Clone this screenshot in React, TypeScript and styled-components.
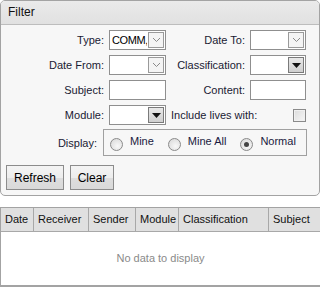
import React from 'react';
import styled, { createGlobalStyle } from 'styled-components';

const Global = createGlobalStyle`
  html, body {
    margin: 0;
    padding: 0;
    background: #ffffff;
  }
  body {
    font-family: 'Liberation Sans', Arial, sans-serif;
    font-size: 11px;
    color: #1c1c1c;
  }
`;

export default function App() {
  return (
    <Page>
      <Global />
      <Panel>
        <PanelHeader>Filter</PanelHeader>
        <PanelBody>
          <FormGrid>
            <Label>Type:</Label>
            <Combo value='COMM,' />
            <Label>Date To:</Label>
            <Combo />

            <Label>Date From:</Label>
            <Combo />
            <Label>Classification:</Label>
            <Combo dark />

            <Label>Subject:</Label>
            <TextBox />
            <Label>Content:</Label>
            <TextBox />

            <Label>Module:</Label>
            <Combo dark />
            <Label>Include lives with:</Label>
            <CheckCell>
              <CheckBox />
            </CheckCell>
          </FormGrid>

          <DisplayRow>
            <DisplayLabel>Display:</DisplayLabel>
            <RadioGroup>
              <Radio label='Mine' />
              <Radio label='Mine All' />
              <Radio label='Normal' checked />
            </RadioGroup>
          </DisplayRow>

          <ButtonRow>
            <Button $w={58}>Refresh</Button>
            <Button $w={44}>Clear</Button>
          </ButtonRow>
        </PanelBody>
      </Panel>

      <Grid>
        <GridHead>
          <HeadCell $w={33}>Date</HeadCell>
          <HeadCell $w={55}>Receiver</HeadCell>
          <HeadCell $w={47}>Sender</HeadCell>
          <HeadCell $w={43}>Module</HeadCell>
          <HeadCell $w={90}>Classification</HeadCell>
          <HeadCell $w={50} $last>Subject</HeadCell>
        </GridHead>
        <GridBody>No data to display</GridBody>
      </Grid>
    </Page>
  );
}

function Combo({ value, dark }: { value?: string; dark?: boolean }) {
  return (
    <ComboBox>
      <ComboText>{value}</ComboText>
      <ComboButton $dark={dark}>
        {dark ? (
          <svg width='9' height='5' viewBox='0 0 9 5'>
            <path d='M0 0h9L4.5 5z' fill='#111' />
          </svg>
        ) : (
          <svg width='9' height='6' viewBox='0 0 9 6'>
            <path d='M1 1l3.5 3.5L8 1' fill='none' stroke='#8a8a8a' strokeWidth='1' />
          </svg>
        )}
      </ComboButton>
    </ComboBox>
  );
}

function Radio({ label, checked }: { label: string; checked?: boolean }) {
  return (
    <RadioItem>
      <RadioDot $checked={checked} />
      <RadioText>{label}</RadioText>
    </RadioItem>
  );
}

const Page = styled.div`
  width: 320px;
  height: 287px;
  display: flex;
  flex-direction: column;
  overflow: hidden;
`;

const Panel = styled.div`
  border: 1px solid #a3a3a3;
  border-radius: 5px;
  background: #f7f7f7;
  height: 196px;
  box-sizing: border-box;
  display: flex;
  flex-direction: column;
`;

const PanelHeader = styled.div`
  height: 23px;
  line-height: 23px;
  padding-left: 7px;
  font-size: 12px;
  background: linear-gradient(#eaeaea, #e1e1e1);
  border-bottom: 1px solid #bdbdbd;
  border-radius: 4px 4px 0 0;
  color: #111;
`;

const PanelBody = styled.div`
  padding: 5px 0 0 0;
  display: flex;
  flex-direction: column;
`;

const FormGrid = styled.div`
  display: grid;
  grid-template-columns: 103px 57px 74px 56px;
  grid-auto-rows: 20px;
  column-gap: 5px;
  row-gap: 5px;
  align-items: center;
`;

const Label = styled.div`
  text-align: right;
  white-space: nowrap;
  color: #1a1a33;
`;

const ComboBox = styled.div`
  height: 20px;
  box-sizing: border-box;
  border: 1px solid #8f8f8f;
  background: #fff;
  display: flex;
  align-items: stretch;
`;

const ComboText = styled.div`
  flex: 1;
  min-width: 0;
  padding-left: 2px;
  line-height: 18px;
  letter-spacing: -0.4px;
  overflow: hidden;
  white-space: nowrap;
  color: #000;
`;

const ComboButton = styled.div<{ $dark?: boolean }>`
  width: 16px;
  flex: none;
  margin: 1px;
  box-sizing: border-box;
  border: 1px solid ${(p) => (p.$dark ? '#7a7a7a' : '#9a9a9a')};
  background: ${(p) => (p.$dark ? 'linear-gradient(#e8e8e8, #cfcfcf)' : '#f4f4f4')};
  display: flex;
  align-items: center;
  justify-content: center;
`;

const TextBox = styled.div`
  height: 20px;
  box-sizing: border-box;
  border: 1px solid #8f8f8f;
  background: #fff;
`;

const CheckCell = styled.div`
  display: flex;
  justify-content: flex-end;
`;

const CheckBox = styled.div`
  width: 13px;
  height: 13px;
  box-sizing: border-box;
  border: 1px solid #8a8a8a;
  background: linear-gradient(135deg, #dcdcdc, #f6f6f6);
  box-shadow: inset 0 0 0 1px #f0f0f0;
`;

const DisplayRow = styled.div`
  display: flex;
  align-items: center;
  margin-top: 4px;
  gap: 6px;
`;

const DisplayLabel = styled.div`
  width: 96px;
  text-align: right;
  color: #1a1a33;
`;

const RadioGroup = styled.div`
  width: 204px;
  height: 27px;
  box-sizing: border-box;
  border: 1px solid #a0a0a0;
  display: flex;
  align-items: center;
  padding-left: 6px;
  gap: 14px;
`;

const RadioItem = styled.div`
  display: flex;
  align-items: center;
  gap: 7px;
  white-space: nowrap;
`;

const RadioDot = styled.div<{ $checked?: boolean }>`
  width: 13px;
  height: 13px;
  box-sizing: border-box;
  border-radius: 50%;
  border: 1px solid #8a8a8a;
  background: radial-gradient(circle at 60% 65%, #f8f8f8, #d6d6d6);
  margin-top: 3px;
  display: flex;
  align-items: center;
  justify-content: center;
  &::after {
    content: '';
    display: ${(p) => (p.$checked ? 'block' : 'none')};
    width: 5px;
    height: 5px;
    border-radius: 50%;
    background: #444;
  }
`;

const RadioText = styled.span`
  color: #1a1a40;
  margin-top: -4px;
`;

const ButtonRow = styled.div`
  display: flex;
  gap: 6px;
  padding-left: 5px;
  margin-top: 9px;
`;

const Button = styled.div<{ $w: number }>`
  width: ${(p) => p.$w}px;
  height: 25px;
  box-sizing: border-box;
  border: 1px solid #8c8c8c;
  background: linear-gradient(#f4f4f4 0%, #ededed 50%, #dedede 51%, #d9d9d9 100%);
  display: flex;
  align-items: center;
  justify-content: center;
  font-size: 12px;
  color: #000;
`;

const Grid = styled.div`
  margin-top: 11px;
  border: 1px solid #a3a3a3;
  border-right: none;
  flex: 1;
  display: flex;
  flex-direction: column;
  background: #fff;
  min-height: 0;
`;

const GridHead = styled.div`
  height: 24px;
  box-sizing: border-box;
  display: flex;
  background: #e0e0e0;
  border-bottom: 1px solid #a8a8a8;
`;

const HeadCell = styled.div<{ $w: number; $last?: boolean }>`
  width: ${(p) => p.$w}px;
  flex: ${(p) => (p.$last ? 1 : 'none')};
  box-sizing: border-box;
  border-right: ${(p) => (p.$last ? 'none' : '1px solid #a8a8a8')};
  padding-left: 4px;
  line-height: 23px;
  white-space: nowrap;
  overflow: hidden;
  color: #111;
`;

const GridBody = styled.div`
  flex: 1;
  display: flex;
  align-items: center;
  justify-content: center;
  color: #8a8a8a;
  border-bottom: 1px solid #a3a3a3;
  padding-bottom: 2px;
`;
